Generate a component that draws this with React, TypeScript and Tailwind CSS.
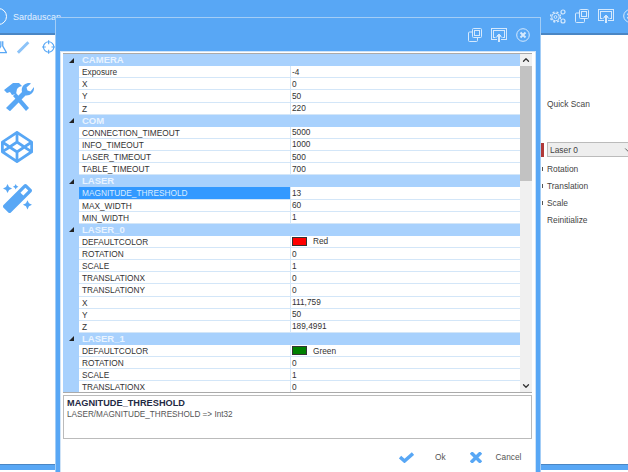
import { ChevronDown, ChevronUp } from "lucide-react";
import { FaCodepen, FaMagic } from "react-icons/fa";

type Row = { name: string; value?: string; swatch?: string; group?: boolean; selected?: boolean };

const rows: Row[] = [
  { name: "CAMERA", group: true },
  { name: "Exposure", value: "-4" },
  { name: "X", value: "0" },
  { name: "Y", value: "50" },
  { name: "Z", value: "220" },
  { name: "COM", group: true },
  { name: "CONNECTION_TIMEOUT", value: "5000" },
  { name: "INFO_TIMEOUT", value: "1000" },
  { name: "LASER_TIMEOUT", value: "500" },
  { name: "TABLE_TIMEOUT", value: "700" },
  { name: "LASER", group: true },
  { name: "MAGNITUDE_THRESHOLD", value: "13", selected: true },
  { name: "MAX_WIDTH", value: "60" },
  { name: "MIN_WIDTH", value: "1" },
  { name: "LASER_0", group: true },
  { name: "DEFAULTCOLOR", value: "Red", swatch: "bg-[#ff0000]" },
  { name: "ROTATION", value: "0" },
  { name: "SCALE", value: "1" },
  { name: "TRANSLATIONX", value: "0" },
  { name: "TRANSLATIONY", value: "0" },
  { name: "X", value: "111,759" },
  { name: "Y", value: "50" },
  { name: "Z", value: "189,4991" },
  { name: "LASER_1", group: true },
  { name: "DEFAULTCOLOR", value: "Green", swatch: "bg-[#008000]" },
  { name: "ROTATION", value: "0" },
  { name: "SCALE", value: "1" },
  { name: "TRANSLATIONX", value: "0" },
];

const ICON = "#d5e9fd";

function RestoreIcon() {
  return (
    <svg width="14" height="14" viewBox="0 0 14 14" fill="none" stroke={ICON} strokeWidth="1">
      <rect x="4.5" y="0.5" width="9" height="9" rx="1" />
      <rect x="6.5" y="2.5" width="5" height="5" />
      <path d="M4.5 4H1.5a1 1 0 0 0-1 1v7.5a1 1 0 0 0 1 1h7a1 1 0 0 0 1-1V9.5" />
    </svg>
  );
}

function ScreenIcon() {
  return (
    <svg width="16" height="15" viewBox="0 0 16 15" fill="none" stroke={ICON} strokeWidth="1">
      <rect x="0.5" y="0.5" width="15" height="11" />
      <rect x="2.5" y="2.5" width="11" height="7" />
      <path d="M8 5L4 9h2.5v5.5h3V9H12z" fill={ICON} stroke="#58a7f5" />
    </svg>
  );
}

function CloseCircleIcon() {
  return (
    <svg width="14" height="14" viewBox="0 0 14 14" fill="none" stroke={ICON} strokeWidth="1">
      <circle cx="7" cy="7" r="6.3" />
      <path d="M4.5 4.5l5 5M9.5 4.5l-5 5" strokeWidth="2" />
    </svg>
  );
}

function CogsIcon() {
  return (
    <svg width="16" height="15" viewBox="0 0 16 15" fill="none" stroke={ICON}>
      <circle cx="5.5" cy="8" r="3.8" strokeWidth="1" />
      <circle cx="5.5" cy="8" r="5" strokeWidth="1.4" strokeDasharray="2 2" />
      <circle cx="5.5" cy="8" r="1.4" />
      <circle cx="13" cy="3" r="2" strokeWidth="1.2" />
      <circle cx="13" cy="12" r="2" strokeWidth="1.2" />
    </svg>
  );
}

function ToolsIcon() {
  return (
    <svg width="31" height="29" viewBox="0 0 31 29" fill="#58a7f5" stroke="none">
      <path d="M1 8L10 1h6l3 3-3 1-2 2-1 5-4 1-2-3-3 1z" />
      <path d="M13 11l13 15-3 3L10 14z" />
      <path d="M3 26L19 10c-1-4 1-8 6-9 1 0 2 0 3 .5L23.500 5.500l1 3 3 1L31 5c.500 5-3 9-8.500 8.500L7 29.200z" />
    </svg>
  );
}

function Triangle() {
  return (
    <svg width="5" height="5" viewBox="0 0 5 5" className="fill-[#222]">
      <path d="M5 0V5H0z" />
    </svg>
  );
}

function GridRow({ row }: { row: Row }) {
  if (row.group) {
    return (
      <div className="flex h-[12.13px] bg-[#a8d1fd] items-center">
        <div className="w-[16px] flex justify-center shrink-0">
          <Triangle />
        </div>
        <div className="pl-[3px] text-[9.5px] font-bold text-[#eaf4ff]">{row.name}</div>
      </div>
    );
  }
  return (
    <div className="flex h-[12.13px] bg-[#a8d1fd]">
      <div className="w-[16px] shrink-0" />
      <div
        className={`w-[211px] shrink-0 pl-[3px] border-b border-[#d3e6f8] ${
          row.selected ? "bg-[#3399ff] text-[#d8ecff]" : "bg-white text-[#333]"
        }`}
      >
        {row.name}
      </div>
      <div className="flex-1 bg-white border-l border-b border-[#d3e6f8] pl-[1px] flex items-center text-[#333]">
        {row.swatch && (
          <span className={`w-[15px] h-[9px] border border-[#333] mr-[6px] ${row.swatch}`} />
        )}
        {row.value}
      </div>
    </div>
  );
}

export default function App() {
  return (
    <div className="relative w-[628px] h-[472px] overflow-hidden bg-white font-['Liberation_Sans',sans-serif] text-[8.3px] leading-[12px] text-[#444]">
      {/* window behind the dialog */}
      <div className="flex flex-col h-full">
        <div className="h-[35px] shrink-0 bg-[#58a7f5] border-b-2 border-[#4a86c4] flex items-center">
          <div className="w-[17px] h-[17px] -ml-[10px] rounded-full border border-white" />
          <span className="ml-[6px] text-[9px] text-[#e4f1ff]">Sardauscan</span>
          <div className="ml-auto flex items-center gap-[9px] -mr-[9px] -mt-[1px]">
            <CogsIcon />
            <RestoreIcon />
            <ScreenIcon />
            <CloseCircleIcon />
          </div>
        </div>
        <div className="flex-1 flex justify-between">
          <div className="w-[55px] flex flex-col text-[#58a7f5]">
            <div className="flex gap-[10px] -ml-[2px] mt-[5px]">
              <svg width="10" height="14" viewBox="0 0 10 14" fill="none" stroke="#58a7f5" strokeWidth="1.4">
                <path d="M3 1v5l-4 7h10l-4-7V1" />
              </svg>
              <svg width="14" height="14" viewBox="0 0 14 14" fill="none" stroke="#8cc3f8" strokeWidth="3">
                <path d="M1 13L12 2" />
              </svg>
              <svg width="14" height="14" viewBox="0 0 14 14" fill="none" stroke="#58a7f5" strokeWidth="1.2" className="ml-[1px]">
                <circle cx="7" cy="7" r="5.500" />
                <path d="M7 0v4M7 10v4M0 7h4M10 7h4" />
              </svg>
            </div>
            <div className="ml-[3px] mt-[28px]">
              <ToolsIcon />
            </div>
            <FaCodepen size={32} className="ml-[1px] mt-[20px]" />
            <FaMagic size={29} className="ml-[3px] mt-[21px]" />
          </div>
          <div className="w-[87px] pl-[6px] pt-[63px] text-[8.4px]">
            <div>Quick Scan</div>
            <div className="mt-[32px] flex items-center">
              <div className="h-[14px] w-[3px] bg-[#b03a3a] -ml-[6px] mr-[3px] shrink-0" />
              <div className="w-[90px] h-[15px] shrink-0 border border-[#bbb] bg-[#eee] pl-[2px] flex items-center justify-between">
                Laser 0
                <ChevronDown size={10} className="mr-[3px]" />
              </div>
            </div>
            <div className="mt-[6px] flex flex-col gap-[5px]">
              {["Rotation", "Translation", "Scale"].map((label) => (
                <div key={label} className="flex items-center -ml-[6px]">
                  <span className="w-[1px] h-[4px] bg-[#555] ml-[1px] mr-[4px]" />
                  {label}
                </div>
              ))}
              <div>Reinitialize</div>
            </div>
          </div>
        </div>
        <div className="h-[6px] mb-[2px] shrink-0 bg-[#58a7f5] border-t border-[#4a86c4]" />
      </div>

      {/* settings dialog */}
      <div className="absolute left-[55px] top-[17px] w-[486px] h-[455px] bg-[#58a7f5] border-t border-x border-[#a3cdf6] flex flex-col">
        <div className="h-[33px] shrink-0 flex items-center justify-end gap-[9px] pr-[10px] pt-[1px]">
          <RestoreIcon />
          <ScreenIcon />
          <CloseCircleIcon />
        </div>
        <div className="flex-1 bg-white mx-[4px] border-t border-x border-[#cfe3f7] pl-[2px] pr-[3px] pt-[1px] flex flex-col">
          <div className="flex h-[340px] border-y border-[#aaa]">
            <div className="flex-1 overflow-hidden">
              {rows.map((row, i) => (
                <GridRow key={i} row={row} />
              ))}
            </div>
            <div className="w-[12px] bg-[#f0f0f0] flex flex-col items-center">
              <ChevronUp size={10} strokeWidth={3} className="text-[#333] my-[1px]" />
              <div className="w-full h-[115px] bg-[#c2c2c2]" />
              <ChevronDown size={10} strokeWidth={3} className="text-[#333] mt-auto mb-[1px]" />
            </div>
          </div>
          <div className="mt-[2px] h-[44px] border border-[#bbb] px-[3px] pt-[1px]">
            <div className="font-bold text-[9.2px] text-[#1f2a44]">MAGNITUDE_THRESHOLD</div>
            <div className="text-[#555] text-[8.2px]">LASER/MAGNITUDE_THRESHOLD =&gt; Int32</div>
          </div>
          <div className="flex items-center pt-[12px] pl-[336px] text-[#555]">
            <svg width="15" height="11" viewBox="0 0 15 11" fill="none" stroke="#58a7f5" strokeWidth="3.500">
              <path d="M1 5l4.500 4L14 1.500" />
            </svg>
            <span className="ml-[21px]">Ok</span>
            <svg width="12" height="11" viewBox="0 0 12 11" fill="none" stroke="#58a7f5" strokeWidth="3.500" className="ml-[24px]">
              <path d="M1 .5l10 10M11 .5l-10 10" />
            </svg>
            <span className="ml-[14px]">Cancel</span>
          </div>
        </div>
      </div>
    </div>
  );
}
